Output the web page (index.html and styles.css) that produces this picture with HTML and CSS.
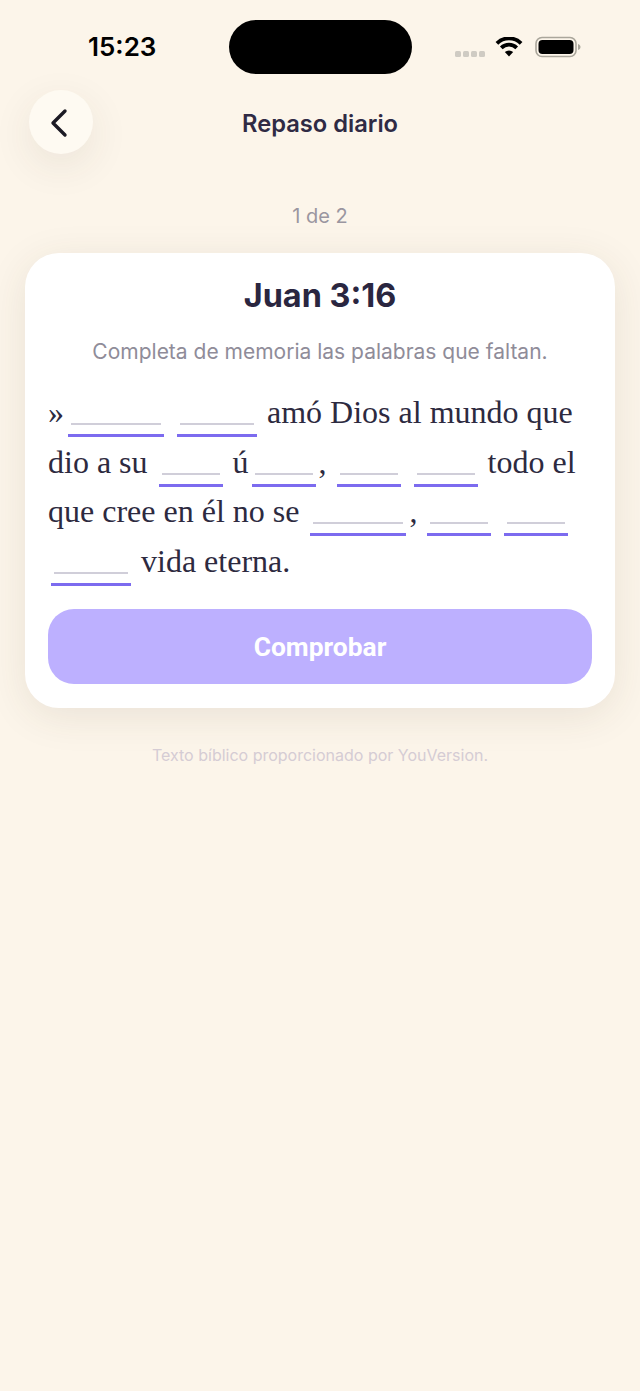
FILE: index.html
```html
<!DOCTYPE html>
<html lang="es">
<head>
<meta charset="utf-8">
<title>Repaso diario</title>
<link rel="stylesheet" href="styles.css">
</head>
<body>
<div class="screen">
  <div class="status">
    <span class="time">15:23</span>
    <div class="island"></div>
    <div class="status-icons">
      <div class="dots"><i></i><i></i><i></i><i></i></div>
      <svg class="wifi" width="28" height="21" viewBox="0 0 28 21"><path d="M14 19.500l4.200 -4.400a6 6 0 0 0 -8.400 0z" fill="#000"/><path d="M6.300 10.800a11 11 0 0 1 15.400 0M1.900 6.300a17.200 17.200 0 0 1 24.200 0" fill="none" stroke="#000" stroke-width="3.800"/></svg>
      <svg class="battery" width="46" height="22" viewBox="0 0 46 22"><rect x="1" y="1.500" width="40" height="19" rx="6" fill="none" stroke="#aaa69b" stroke-width="1.600"/><rect x="3.500" y="4" width="35" height="14" rx="4" fill="#000"/><path d="M43 8v6c1.500 -.5 2.500 -1.500 2.500 -3s-1 -2.500 -2.500 -3z" fill="#aaa69b"/></svg>
    </div>
  </div>
  <header class="nav">
    <button class="back" aria-label="Volver">
      <svg width="20" height="30" viewBox="0 0 20 30"><path d="M16 3L4 15l12 12" fill="none" stroke="#1c1a24" stroke-width="3.400" stroke-linecap="round" stroke-linejoin="round"/></svg>
    </button>
    <h1 class="nav-title">Repaso diario</h1>
  </header>
  <p class="progress">1 de 2</p>
  <section class="card">
    <h2 class="ref">Juan 3:16</h2>
    <p class="hint">Completa de memoria las palabras que faltan.</p>
    <p class="verse">» <span class="blank w96 lead"><b></b></span><span class="blank w80"><b></b></span> amó Dios al mundo que<br>dio a su <span class="blank w64 wide"><b></b></span> ú<span class="blank w64 wide"><b></b></span><span class="comma">,</span> <span class="blank w64 narrow next"><b></b></span><span class="blank w64"><b></b></span> todo el<br>que cree en él no se <span class="blank w96"><b></b></span><span class="comma">,</span> <span class="blank w64 narrow next"><b></b></span><span class="blank w64"><b></b></span><br><span class="blank w80"><b></b></span> vida eterna.</p>
    <button class="check">Comprobar</button>
  </section>
  <p class="credit">Texto bíblico proporcionado por YouVersion.</p>
</div>
</body>
</html>
```
FILE: styles.css
```css
* { box-sizing: border-box; }
html, body { margin: 0; padding: 0; }
body { background: #fcf5ea; font-family: Inter, "Liberation Sans", sans-serif; }
.screen { width: 640px; height: 1391px; overflow: hidden; background: #fcf5ea; }

.status { height: 90px; position: relative; display: flex; align-items: flex-start; padding: 0 59px 0 88px; justify-content: space-between; }
.time { margin-top: 32px; font-size: 26px; line-height: 30px; font-weight: 600; color: #000; }
.island { position: absolute; left: 229px; top: 20px; width: 183px; height: 54px; border-radius: 27px; background: #000; }
.status-icons { display: flex; align-items: center; margin-top: 36px; height: 22px; }
.dots { display: flex; gap: 2px; margin-top: 14px; margin-right: 10px; }
.dots i { width: 6px; height: 6px; border-radius: 1.500px; background: #cfcbc3; }
.wifi { margin-right: 12px; }

.nav { position: relative; height: 64px; display: flex; justify-content: center; align-items: center; }
.back { position: absolute; left: 29px; top: 0; width: 64px; height: 64px; border: 0; padding: 0; border-radius: 50%; background: #fefaf2; box-shadow: 0 12px 40px rgba(70, 60, 40, .09); display: flex; align-items: center; justify-content: center; }
.back svg { margin-left: -4px; margin-top: 2px; }
.nav-title { margin: 4px 0 0; font-size: 23.700px; line-height: 30px; font-weight: 600; color: #2f2a44; }

.progress { margin: 49px 0 0; text-align: center; font-size: 20px; line-height: 26px; color: #9a96a0; }

.card { margin: 24px 25px 0; height: 455px; padding: 23px 23px 24px; background: #fff; border-radius: 34px; box-shadow: 0 8px 40px rgba(70, 60, 40, .10); }
.ref { margin: 0; text-align: center; font-size: 32.400px; line-height: 40px; font-weight: 700; color: #2a2640; }
.hint { margin: 23px 0 0; text-align: center; font-size: 21px; line-height: 26px; color: #8f8c99; }
.verse { margin: 23px 0 0; width: 544px; font-family: "Liberation Serif", serif; font-size: 32px; line-height: 49.500px; color: #2d2a40; white-space: nowrap; }
.blank { display: inline-block; vertical-align: baseline; height: 30px; margin: 0 2px 0 3px; border-bottom: 3px solid #7c6bef; position: relative; top: 14px; }
.blank b { display: block; height: 2px; margin: 16px 3px 0; background: #d0ced9; }
.blank.lead { margin-left: -4px; margin-right: 10px; }
.blank.wide { margin-left: 3px; }
.blank.narrow { margin-left: 2px; }
.blank.next { margin-right: 10px; }
.comma { margin-left: 1px; }
.w96 { width: 96px; }
.w80 { width: 80px; }
.w64 { width: 64px; }

.check { display: block; width: 544px; height: 75px; margin-top: 23px; border: 0; border-radius: 26px; background: #bdb0ff; color: #fff; font-family: Roboto, Inter, sans-serif; font-size: 26.400px; font-weight: 700; }
.credit { margin: 37px 0 0; text-align: center; font-size: 16px; line-height: 20px; color: #d5ccd4; }
```
